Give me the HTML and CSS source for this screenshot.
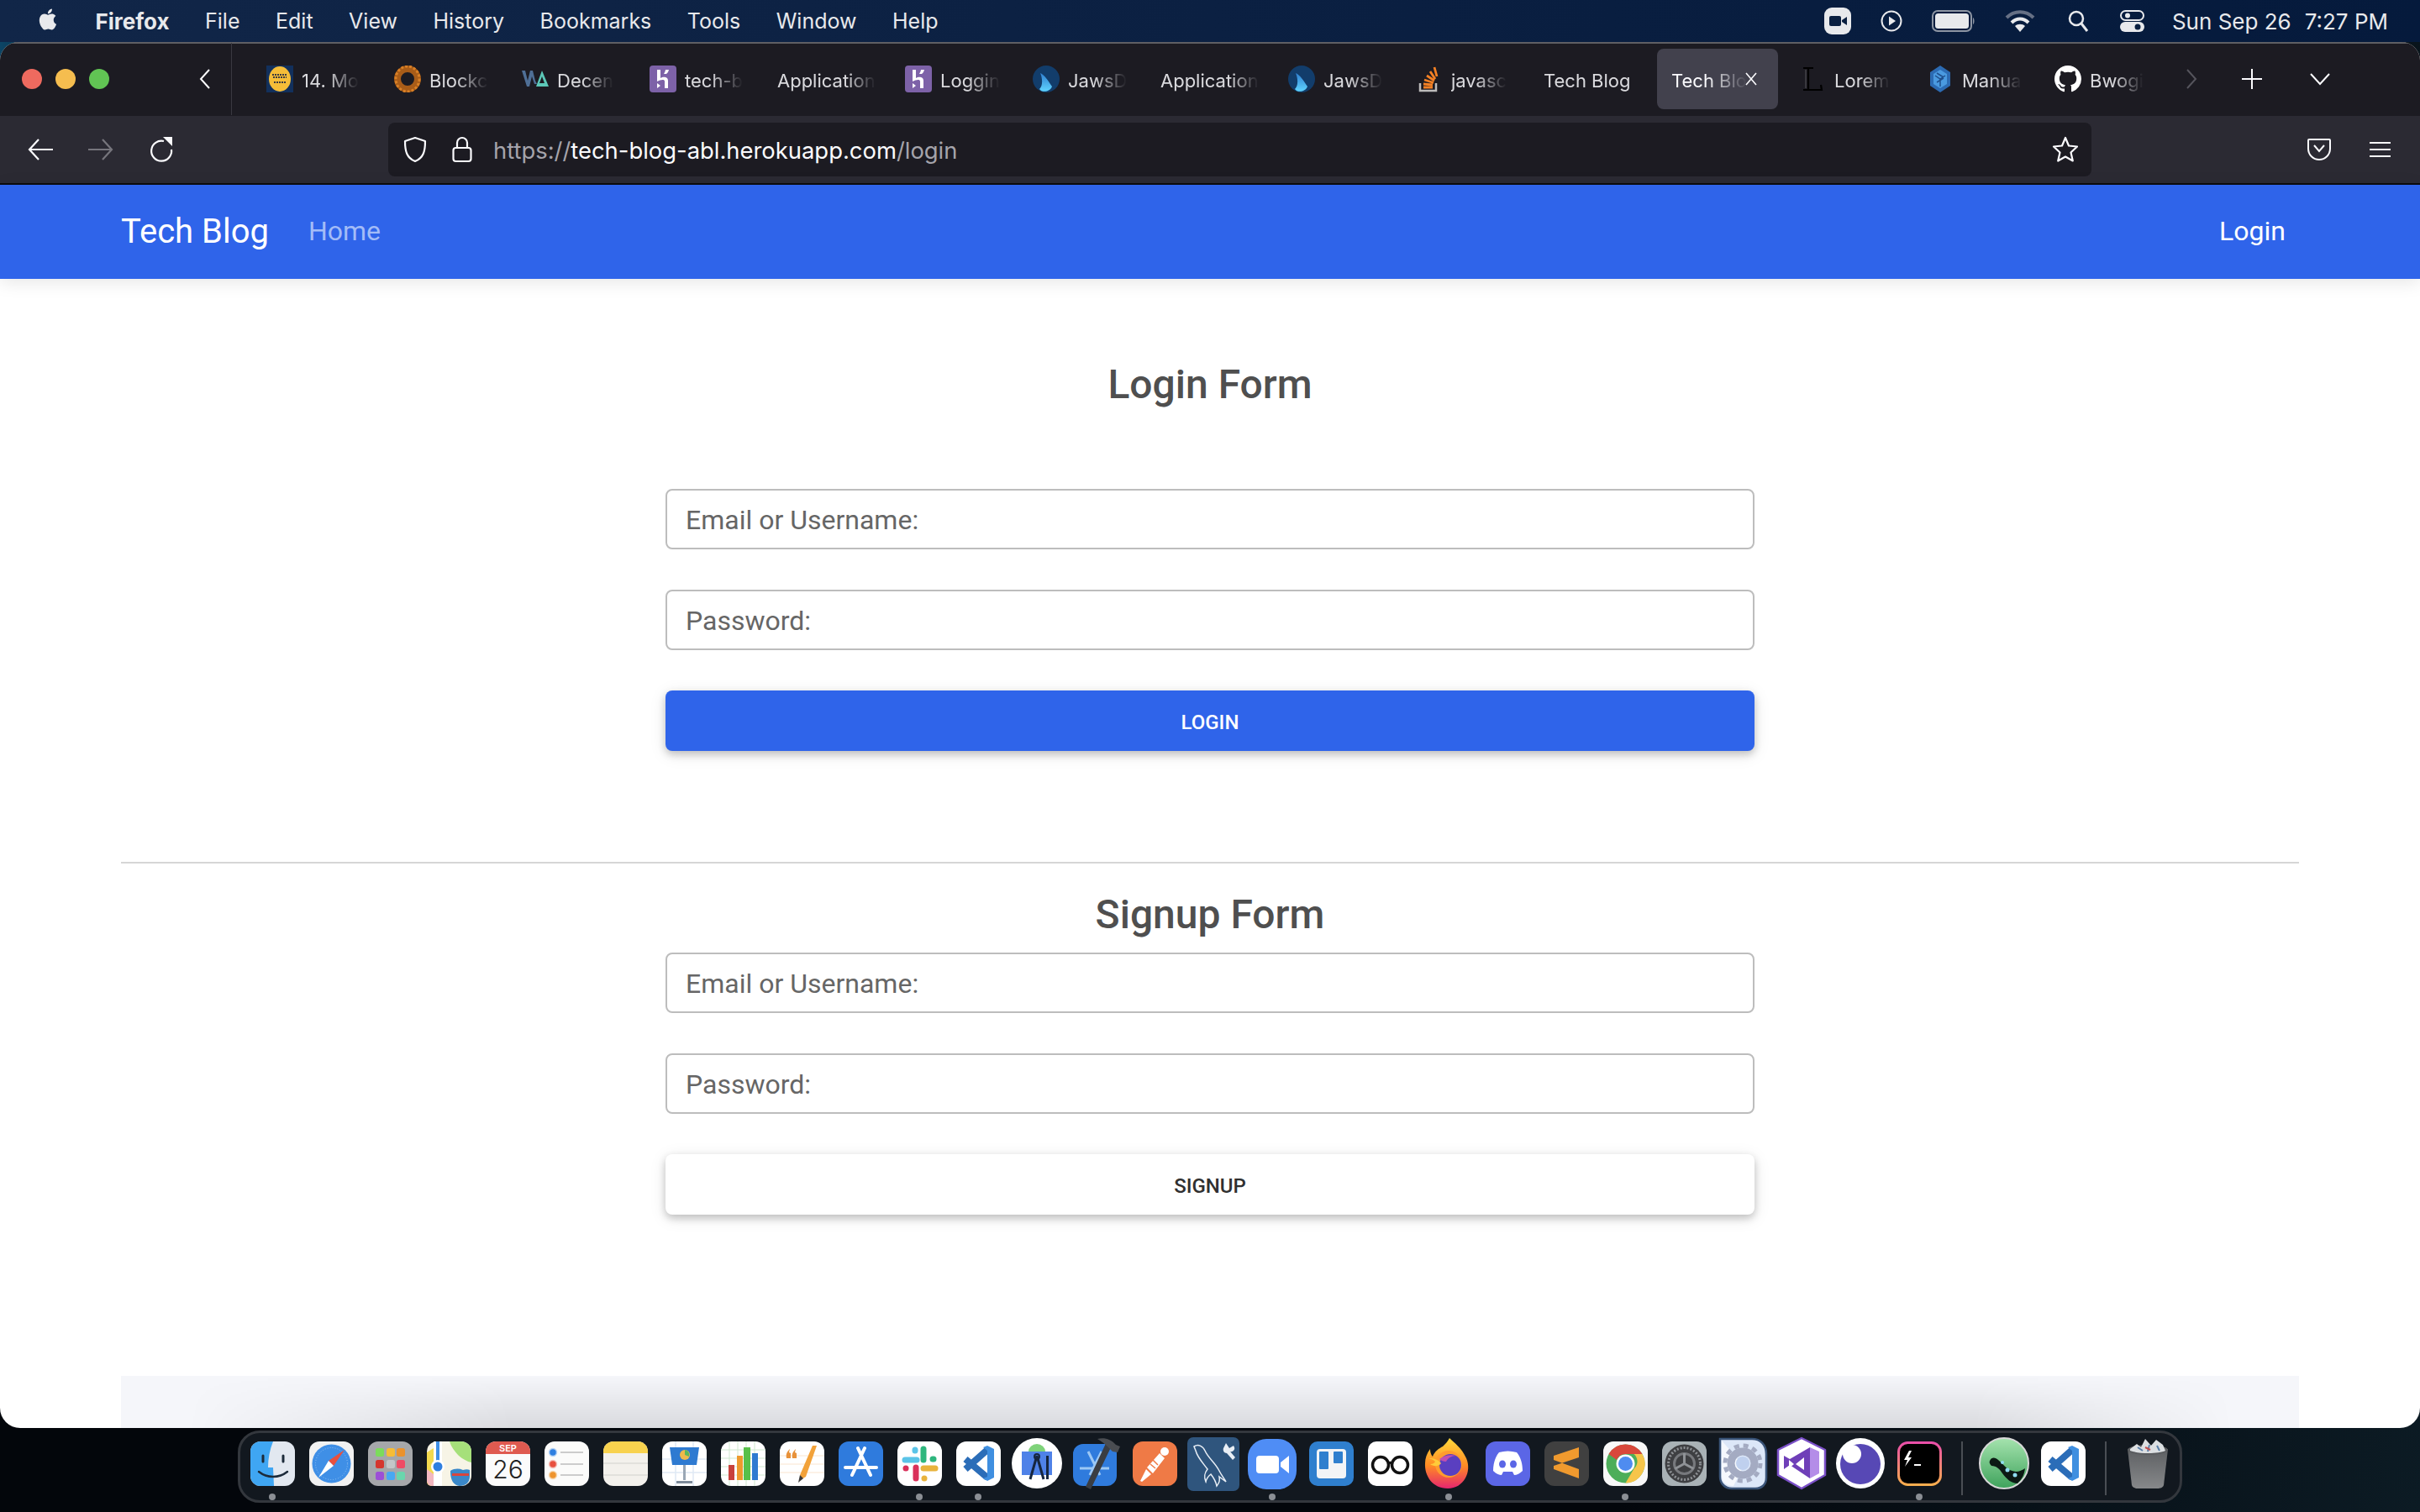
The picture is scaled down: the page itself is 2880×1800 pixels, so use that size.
FILE: index.html
```html
<!DOCTYPE html>
<html lang="en">

<head>
    <meta charset="utf-8">
    <title>Tech Blog</title>
    <link rel="stylesheet" href="styles.css">
</head>

<body>
    <svg class="defs" width="0" height="0">
        <defs>
            <linearGradient id="gFire" x1="0" y1="0" x2="0" y2="1">
                <stop offset="0" stop-color="#ffd93b" />
                <stop offset="0.55" stop-color="#ff8a24" />
                <stop offset="1" stop-color="#e5256f" />
            </linearGradient>
            <linearGradient id="gHyper" x1="0" y1="0" x2="0" y2="1">
                <stop offset="0" stop-color="#ea4fa8" />
                <stop offset="1" stop-color="#f8ad4e" />
            </linearGradient>
            <linearGradient id="gFin" x1="0" y1="0" x2="0" y2="1">
                <stop offset="0" stop-color="#2f7fd0" />
                <stop offset="1" stop-color="#5fd4ff" />
            </linearGradient>
            <linearGradient id="gTrash" x1="0" y1="0" x2="0" y2="1">
                <stop offset="0" stop-color="#5e6063" />
                <stop offset="1" stop-color="#86888a" />
            </linearGradient>
            <linearGradient id="gKraken" x1="0" y1="0" x2="0" y2="1">
                <stop offset="0" stop-color="#a5e3ae" />
                <stop offset="1" stop-color="#3fa35c" />
            </linearGradient>
            <symbol id="vscode" viewBox="0 0 62 62">
                <rect x="5" y="5" width="53" height="53" rx="12" fill="#fff" />
                <path d="M42 15L16 38M16 26l26 22" fill="none" stroke="#2b6db8" stroke-width="8" />
                <path d="M37 12l5-2 8 4v34l-8 4-5-3 5-2V16z" fill="#3f8fe0" />
            </symbol>
            <symbol id="heroku" viewBox="0 0 32 32">
                <rect width="32" height="32" rx="4" fill="#7d62a8" />
                <path d="M9 5h4v10c3-2 9-2 9 3v9h-4v-8c0-3-5-2-9 0zM19 5h4c-.5 2-1.500 4-3 5h-3c1-1.500 1.600-3 2-5zM9 21l4 3-4 3z" fill="#fff" />
            </symbol>
            <symbol id="jaws" viewBox="0 0 32 32">
                <ellipse cx="16" cy="16" rx="16" ry="16" fill="#123d6b" />
                <path d="M9 9c5 2 10 10 14 16-2 6-12 8-15 3 4-4 4-12 1-19z" fill="url(#gFin)" />
            </symbol>
        </defs>
    </svg>

    <div class="menubar">
        <svg class="apple" viewBox="0 0 24 24"><path fill="#e8e9ec" d="M18.71 19.5c-.83 1.24-1.71 2.45-3.05 2.47-1.34.03-1.77-.79-3.29-.79-1.53 0-2 .77-3.27.82-1.31.05-2.3-1.32-3.14-2.53C4.25 17 2.94 12.45 4.7 9.39c.87-1.52 2.43-2.48 4.12-2.51 1.28-.02 2.5.87 3.29.87.78 0 2.26-1.07 3.81-.91.65.03 2.47.26 3.64 1.98-.09.06-2.17 1.28-2.15 3.81.03 3.02 2.65 4.03 2.68 4.04-.03.07-.42 1.44-1.38 2.83M13 3.5c.73-.83 1.94-1.46 2.94-1.5.13 1.17-.34 2.35-1.04 3.19-.69.85-1.83 1.51-2.95 1.42-.15-1.15.41-2.35 1.05-3.11z" /></svg>
        <b>Firefox</b>
        <span>File</span>
        <span>Edit</span>
        <span>View</span>
        <span>History</span>
        <span>Bookmarks</span>
        <span>Tools</span>
        <span>Window</span>
        <span>Help</span>
        <div class="status">
            <svg width="32" height="32" viewBox="0 0 32 32"><rect width="32" height="32" rx="9" fill="#e8e9ec" /><rect x="6" y="10" width="14" height="12" rx="2" fill="#0a1f40" /><path d="M21 15l6-4v10l-6-4z" fill="#0a1f40" /></svg>
            <svg class="s-play" width="26" height="26" viewBox="0 0 26 26"><circle cx="13" cy="13" r="11.500" fill="none" stroke="#e8e9ec" stroke-width="2" /><path d="M10 7.500l8 5.500-8 5.500z" fill="#e8e9ec" /></svg>
            <svg class="s-batt" width="52" height="26" viewBox="0 0 52 26"><rect x="1" y="1" width="46" height="24" rx="6" fill="none" stroke="#8d95a3" stroke-width="2" /><rect x="4" y="4" width="40" height="18" rx="3.500" fill="#e8e9ec" /><path d="M49 9c2 1 2 7 0 8z" fill="#8d95a3" /></svg>
            <svg class="s-wifi" width="36" height="26" viewBox="0 0 36 26"><path d="M2 9c9-9 23-9 32 0" fill="none" stroke="#667085" stroke-width="4" /><path d="M8 15c6-6 14-6 20 0" fill="none" stroke="#e8e9ec" stroke-width="4" /><path d="M18 26l-6-7c3-3 9-3 12 0z" fill="#e8e9ec" /></svg>
            <svg class="s-search" width="26" height="26" viewBox="0 0 26 26"><circle cx="11" cy="10" r="8" fill="none" stroke="#e8e9ec" stroke-width="2.500" /><path d="M17 16l7 9" stroke="#e8e9ec" stroke-width="3" /></svg>
            <svg class="s-ctl" width="29" height="26" viewBox="0 0 29 26"><rect x="1" y="1" width="27" height="11" rx="5.500" fill="none" stroke="#e8e9ec" stroke-width="2" /><circle cx="9" cy="6.500" r="3" fill="#e8e9ec" /><rect y="14" width="29" height="12" rx="6" fill="#e8e9ec" /><circle cx="21" cy="20" r="3.500" fill="#0a1f40" /></svg>
            <span class="clock">Sun Sep 26</span>
            <span class="clock time">7:27 PM</span>
        </div>
    </div>

    <div class="window">
        <div class="tabbar">
            <div class="lights">
                <i class="light red"></i>
                <i class="light amber"></i>
                <i class="light green"></i>
                <svg class="tabs-back" width="16" height="26" viewBox="0 0 16 26"><path d="M13 2L3 13l10 11" fill="none" stroke="#fbfbfe" stroke-width="2" /></svg>
            </div>
            <div class="tabs">
                <div class="tab">
                    <svg class="fav" viewBox="0 0 32 32"><rect width="32" height="32" fill="#12305c" /><ellipse cx="16" cy="16" rx="13" ry="15" fill="#f5bd38" /><path d="M7 11h18M8 14h16M9 20h14" stroke="#3a3a40" stroke-width="2" stroke-dasharray="2 1" /></svg>
                    <span class="label">14. Mo</span>
                </div>
                <div class="tab">
                    <svg class="fav" viewBox="0 0 32 32"><ellipse cx="16" cy="16" rx="12" ry="12" fill="none" stroke="#a85c18" stroke-width="8" /><ellipse cx="16" cy="16" rx="14" ry="15" fill="none" stroke="#d98026" stroke-width="3" stroke-dasharray="3 2" /><circle cx="16" cy="16" r="4" fill="#1c1b22" /></svg>
                    <span class="label">Blockc</span>
                </div>
                <div class="tab">
                    <svg class="fav" viewBox="0 0 32 32"><path d="M0 6h4l3 12 3-12h3l3 12 2 4h-3l-3-9-3 12H6z" fill="#4f6f96" /><path d="M24 6l8 19H17zM24 13l-3 8h6z" fill="#5cc8b8" /></svg>
                    <span class="label">Decen</span>
                </div>
                <div class="tab">
                    <svg class="fav"><use href="#heroku" /></svg>
                    <span class="label">tech-b</span>
                </div>
                <div class="tab plain"><span class="label">Application</span></div>
                <div class="tab">
                    <svg class="fav"><use href="#heroku" /></svg>
                    <span class="label">Loggin</span>
                </div>
                <div class="tab">
                    <svg class="fav"><use href="#jaws" /></svg>
                    <span class="label">JawsD</span>
                </div>
                <div class="tab plain"><span class="label">Application</span></div>
                <div class="tab">
                    <svg class="fav"><use href="#jaws" /></svg>
                    <span class="label">JawsD</span>
                </div>
                <div class="tab">
                    <svg class="fav" viewBox="0 0 32 32"><path d="M5 21v9h19v-9" fill="none" stroke="#bcbbbb" stroke-width="2.500" /><path d="M9 26h11M9 22l11 1M10 17l11 3.500M13 12l9 6M17 7l6 9M22 2l3 11" stroke="#f48024" stroke-width="2.800" fill="none" /></svg>
                    <span class="label">javasc</span>
                </div>
                <div class="tab plain"><span class="label whole">Tech Blog</span></div>
                <div class="tab active">
                    <span class="label">Tech Blo</span>
                    <svg class="tab-x" width="16" height="16" viewBox="0 0 16 16"><path d="M2 1l12 14M14 1L2 15" stroke="#fbfbfe" stroke-width="1.600" /></svg>
                </div>
                <div class="tab">
                    <svg class="fav" viewBox="0 0 32 32"><path d="M5 3h12M11 3v25M5 29h22l-1-6" fill="none" stroke="#000" stroke-width="2.200" /><path d="M8 5v22" stroke="#56565a" stroke-width="1" /></svg>
                    <span class="label">Lorem</span>
                </div>
                <div class="tab">
                    <svg class="fav" viewBox="0 0 32 32"><path d="M16 0l12 8v16l-12 8-12-8V8z" fill="#2c6bb3" /><path d="M16 5l8 5v12l-8 5-8-5V10z" fill="#4a9ae0" /><path d="M10 12l6 4 6-4M16 16v9M12 9l8 5M12 20l8-5" stroke="#1f4f8c" stroke-width="1.500" fill="none" /></svg>
                    <span class="label">Manua</span>
                </div>
                <div class="tab">
                    <svg class="fav" viewBox="0 0 16 16"><path fill="#fff" d="M8 0C3.580 0 0 3.580 0 8c0 3.540 2.290 6.530 5.470 7.590.4.070.55-.17.55-.38 0-.19-.01-.82-.01-1.490-2.010.37-2.530-.49-2.690-.94-.09-.23-.48-.94-.82-1.130-.28-.15-.68-.52-.01-.53.63-.01 1.080.58 1.230.82.72 1.210 1.870.87 2.330.66.07-.52.28-.87.51-1.070-1.780-.2-3.640-.89-3.640-3.950 0-.87.31-1.590.82-2.150-.08-.2-.36-1.020.08-2.120 0 0 .67-.21 2.200.82.64-.18 1.320-.27 2-.27.68 0 1.360.09 2 .27 1.530-1.040 2.200-.82 2.200-.82.44 1.100.16 1.920.08 2.120.51.56.82 1.270.82 2.150 0 3.070-1.870 3.750-3.650 3.950.29.25.54.73.54 1.480 0 1.070-.01 1.930-.01 2.200 0 .21.15.46.55.38A8.013 8.013 0 0016 8c0-4.420-3.580-8-8-8z" /></svg>
                    <span class="label">Bwogi</span>
                </div>
            </div>
            <svg class="tab-next" width="24" height="26" viewBox="0 0 24 26"><path d="M7 2l10 11L7 24" fill="none" stroke="#55545c" stroke-width="2" /></svg>
            <svg class="tab-new" width="24" height="24" viewBox="0 0 24 24"><path d="M12 0v24M0 12h24" stroke="#fbfbfe" stroke-width="2" /></svg>
            <svg class="tab-list" width="24" height="16" viewBox="0 0 24 16"><path d="M1 2l11 12L23 2" fill="none" stroke="#fbfbfe" stroke-width="2" /></svg>
        </div>

        <div class="toolbar">
            <svg class="t-back" width="30" height="26" viewBox="0 0 30 26"><path d="M13 1L2 13l11 12M2 13h28" fill="none" stroke="#fbfbfe" stroke-width="2.200" /></svg>
            <svg class="t-fwd" width="30" height="26" viewBox="0 0 30 26"><path d="M17 1l11 12-11 12M28 13H0" fill="none" stroke="#76757c" stroke-width="2.200" /></svg>
            <svg class="t-reload" width="30" height="30" viewBox="0 0 30 30"><path d="M19 5a12 12 0 1 0 9 10" fill="none" stroke="#fbfbfe" stroke-width="2.200" /><path d="M18 0h11v11z" fill="#fbfbfe" /></svg>
            <div class="urlbar">
                <svg width="30" height="32" viewBox="0 0 30 32"><path d="M15 2l12 4c0 12-2 20-12 24C5 26 3 18 3 6z" fill="none" stroke="#fbfbfe" stroke-width="2.200" stroke-linejoin="round" /></svg>
                <svg class="u-lock" width="24" height="32" viewBox="0 0 24 32"><path d="M6 14V8a6 6 0 0 1 12 0v6" fill="none" stroke="#fbfbfe" stroke-width="2.200" /><rect x="1.500" y="14" width="21" height="16" rx="3" fill="none" stroke="#fbfbfe" stroke-width="2.200" /></svg>
                <span class="url"><em>https://</em>tech-blog-abl.herokuapp.com<em>/login</em></span>
                <svg class="u-star" width="32" height="32" viewBox="0 0 32 32"><path d="M16 2l4 9.500 10 1-7.500 7 2.300 10L16 24.500 7.200 29.500l2.300-10L2 12.500l10-1z" fill="none" stroke="#fbfbfe" stroke-width="2.200" stroke-linejoin="round" /></svg>
            </div>
            <svg class="t-pocket" width="28" height="26" viewBox="0 0 28 26"><path d="M2 1h24a1 1 0 0 1 1 1v10a13 13 0 0 1-26 0V2a1 1 0 0 1 1-1z" fill="none" stroke="#fbfbfe" stroke-width="2" /><path d="M8 8l6 7 6-7" fill="none" stroke="#fbfbfe" stroke-width="2" /></svg>
            <svg class="t-menu" width="25" height="20" viewBox="0 0 25 20"><path d="M0 2h25M0 10h25M0 18h25" stroke="#fbfbfe" stroke-width="2.200" /></svg>
        </div>

        <nav class="navbar">
            <a class="brand">Tech Blog</a>
            <a class="nav-link">Home</a>
            <a class="nav-login">Login</a>
        </nav>

        <main class="page">
            <section class="login-box">
                <h3 class="form-title">Login Form</h3>
                <form class="auth-form">
                    <input class="field" type="text" placeholder="Email or Username:">
                    <input class="field" type="password" placeholder="Password:">
                    <button class="btn btn-blue" type="button">Login</button>
                </form>
            </section>
            <hr class="rule">
            <section class="signup-box">
                <h3 class="form-title tight">Signup Form</h3>
                <form class="auth-form">
                    <input class="field" type="text" placeholder="Email or Username:">
                    <input class="field" type="password" placeholder="Password:">
                    <button class="btn btn-light" type="button">Signup</button>
                </form>
            </section>
            <footer class="foot"></footer>
        </main>
    </div>

    <div class="desk">
        <div class="dock">
            <!-- finder -->
            <div class="app on"><svg viewBox="0 0 62 62"><rect x="5" y="5" width="53" height="53" rx="12" fill="#e2e8f0" /><path d="M17 5h15c-4 10-6 20-6 31h6l1 22H17A12 12 0 0 1 5 46V17A12 12 0 0 1 17 5z" fill="#3fa6f3" /><path d="M20 22v7M44 22v7" stroke="#1c2b3a" stroke-width="3" stroke-linecap="round" /><path d="M15 41c10 8 24 8 34 0" fill="none" stroke="#1c2b3a" stroke-width="2.500" stroke-linecap="round" /></svg><i class="dot"></i></div>
            <!-- safari -->
            <div class="app"><svg viewBox="0 0 62 62"><rect x="5" y="5" width="53" height="53" rx="12" fill="#f1f1f1" /><circle cx="31.500" cy="31.500" r="23" fill="#3f8fe6" /><circle cx="31.500" cy="31.500" r="19" fill="none" stroke="#8fc0f2" stroke-width="1" stroke-dasharray="1 2" /><path d="M47 15L28 28l6 6z" fill="#e8503f" /><path d="M16 48l12-20 6 6z" fill="#fff" /></svg></div>
            <!-- launchpad -->
            <div class="app"><svg viewBox="0 0 62 62"><rect x="5" y="5" width="53" height="53" rx="12" fill="#a5a7aa" /><g><rect x="14" y="13" width="10" height="10" rx="2.500" fill="#7bdc5b" /><rect x="27" y="13" width="10" height="10" rx="2.500" fill="#f6bd36" /><rect x="39" y="13" width="10" height="10" rx="2.500" fill="#ea922d" /><rect x="14" y="27" width="10" height="10" rx="2.500" fill="#d5362e" /><rect x="27" y="27" width="10" height="10" rx="2.500" fill="#c3c6c8" /><rect x="39" y="27" width="10" height="10" rx="2.500" fill="#ef4b65" /><rect x="14" y="41" width="10" height="10" rx="2.500" fill="#9c4fd6" /><rect x="27" y="41" width="10" height="10" rx="2.500" fill="#48a8f2" /><rect x="39" y="41" width="10" height="10" rx="2.500" fill="#69d6ad" /></g></svg></div>
            <!-- maps -->
            <div class="app"><svg viewBox="0 0 62 62"><rect x="5" y="5" width="53" height="53" rx="12" fill="#f7f4e6" /><path d="M32 5h14a12 12 0 0 1 12 12v13C48 28 36 18 32 5z" fill="#a6e07a" /><path d="M5 18l8-5v45h-3a5 5 0 0 1-5-5z" fill="#f2d94e" /><path d="M5 38l8 6v14h-2a6 6 0 0 1-6-6z" fill="#f2b7c0" /><rect x="13" y="5" width="10" height="53" fill="#fff" /><rect x="16" y="5" width="4" height="27" fill="#3f8fe6" /><circle cx="18" cy="35" r="8" fill="#fff" /><circle cx="18" cy="35" r="5.500" fill="#2f7fe0" /><path d="M33 40c5-3 10-3 15-1 3-1 6-1 8 0v8c0 7-5 11-12 11-7-1-11-6-11-18z" fill="#3a88c9" /><rect x="35" y="43" width="20" height="3" fill="#d9453d" /></svg></div>
            <!-- calendar -->
            <div class="app"><svg viewBox="0 0 62 62"><rect x="5" y="5" width="53" height="53" rx="12" fill="#fbfbfb" /><path d="M5 20V17A12 12 0 0 1 17 5h29a12 12 0 0 1 12 12v3z" fill="#df5a50" /><text x="31.500" y="17" class="cal-m">SEP</text><text x="31.500" y="49" class="cal-d">26</text></svg></div>
            <!-- reminders -->
            <div class="app"><svg viewBox="0 0 62 62"><rect x="5" y="5" width="53" height="53" rx="12" fill="#fbfbfa" /><circle cx="15" cy="18" r="4.500" fill="#2f7fe0" stroke="#b9d5f5" stroke-width="1.500" /><circle cx="15" cy="32" r="4.500" fill="#e8503f" stroke="#f5c2bb" stroke-width="1.500" /><circle cx="15" cy="45" r="4.500" fill="#ee942e" stroke="#f8d8b0" stroke-width="1.500" /><path d="M24 18h27M24 32h27M24 45h27" stroke="#bdbdbd" stroke-width="1.500" /></svg></div>
            <!-- notes -->
            <div class="app"><svg viewBox="0 0 62 62"><rect x="5" y="5" width="53" height="53" rx="12" fill="#f3f1ec" /><path d="M5 19v-2A12 12 0 0 1 17 5h29a12 12 0 0 1 12 12v2z" fill="#f8d24e" /><path d="M5 31h53M5 45h53" stroke="#dddbd6" stroke-width="1.500" /></svg></div>
            <!-- keynote -->
            <div class="app"><svg viewBox="0 0 62 62"><rect x="5" y="5" width="53" height="53" rx="12" fill="#fff" /><path d="M5 26h53M5 42h53M21 5v53M42 5v53" stroke="#dfe9f5" stroke-width="1.500" /><path d="M14 12h35l-3 21H17z" fill="#2e7ad1" /><circle cx="32" cy="21" r="6" fill="#f0b94a" /><path d="M32 21v-6a6 6 0 0 1 5 8z" fill="#5cb85c" /><rect x="30" y="33" width="3" height="18" fill="#9aa7b5" /><path d="M22 52h19v3H22z" fill="#7d8a99" /></svg></div>
            <!-- numbers -->
            <div class="app"><svg viewBox="0 0 62 62"><rect x="5" y="5" width="53" height="53" rx="12" fill="#fff" /><path d="M5 15h53M5 25h53M5 35h53M5 45h53M15 5v53M25 5v53M35 5v53M45 5v53" stroke="#cfe8cf" stroke-width="1" /><rect x="14" y="33" width="7" height="18" fill="#c8413c" /><rect x="24" y="22" width="7" height="29" fill="#ee9a2e" /><rect x="32" y="12" width="8" height="39" fill="#58c04a" /><rect x="42" y="19" width="7" height="32" fill="#2e7ad1" /></svg></div>
            <!-- pages -->
            <div class="app"><svg viewBox="0 0 62 62"><rect x="5" y="5" width="53" height="53" rx="12" fill="#fff" /><path d="M5 22h53M5 32h53M5 42h53" stroke="#fae5cf" stroke-width="1" /><path d="M17 14c-3 3-5 5-4 11l5 0v-6l-2-1zM24 14c-3 3-5 5-4 11l5 0v-6l-2-1z" fill="#e8923a" /><path d="M49 10l-5 0-15 35 2 5 5-3z" fill="#f2a23a" /><path d="M29 45l-2 9 6-5z" fill="#3a3a3a" /></svg></div>
            <!-- app store -->
            <div class="app"><svg viewBox="0 0 62 62"><rect x="5" y="5" width="53" height="53" rx="12" fill="#2f7bdd" /><path d="M28 13l15 32M36 13L21 45M13 36h37" stroke="#fff" stroke-width="4" stroke-linecap="round" fill="none" /></svg></div>
            <!-- slack -->
            <div class="app on"><svg viewBox="0 0 62 62"><rect x="5" y="5" width="53" height="53" rx="12" fill="#fff" /><g stroke-linecap="round" stroke-width="7" fill="none"><path d="M14 27h14" stroke="#5bc4e8" /><path d="M26 15v1" stroke="#5bc4e8" /><path d="M36 14v13" stroke="#2eb67d" /><path d="M47 26h1" stroke="#2eb67d" /><path d="M36 37h14" stroke="#e8b33c" /><path d="M37 49h0" stroke="#e8b33c" /><path d="M27 36v13" stroke="#d9305a" /><path d="M15 37h0" stroke="#d9305a" /></g></svg><i class="dot"></i></div>
            <!-- vs code -->
            <div class="app on"><svg viewBox="0 0 62 62"><use href="#vscode" /></svg><i class="dot"></i></div>
            <!-- android studio -->
            <div class="app"><svg viewBox="0 0 62 62"><ellipse cx="31" cy="31" rx="30" ry="30" fill="#fff" /><path d="M21 17a10 9 0 0 1 20 0z" fill="#7fd37a" /><path d="M13 17h36v28H13z" fill="#4f82e8" /><path d="M31 22l-8 28M31 22l8 28" stroke="#16263f" stroke-width="3" /><circle cx="31" cy="23" r="3" fill="none" stroke="#16263f" stroke-width="2" /><path d="M42 22h3v28h-3z" fill="#16263f" /></svg></div>
            <!-- xcode -->
            <div class="app"><svg viewBox="0 0 62 62"><rect x="4" y="8" width="52" height="50" rx="12" fill="#2f7bdd" /><path d="M22 17l14 28M38 17L24 45M12 37h35" stroke="#9cc8f5" stroke-width="3" fill="none" /><path d="M45 3L19 59l6 3 26-54z" fill="#3a3d42" /><path d="M33 2c8-2 16 0 22 7l5 2-3 7-6-1-6-6c-3-3-7-6-12-9z" fill="#4a4d52" /></svg></div>
            <!-- postman -->
            <div class="app"><svg viewBox="0 0 62 62"><rect x="5" y="5" width="53" height="53" rx="12" fill="#ef7a46" /><circle cx="43" cy="17" r="5" fill="#fff" /><path d="M37 19l6 6-14 18-7-7zM21 38l6 6-11 9-2-1z" fill="#fff" /><path d="M29 27l6 6M26 32l6 5" stroke="#ef7a46" stroke-width="1.500" /></svg></div>
            <!-- mysql workbench -->
            <div class="app"><svg viewBox="0 0 62 62"><rect y="0" width="62" height="64" rx="7" fill="#2f557d" /><path d="M8 11c5-3 10-1 13 5 4 9 12 14 17 24 3 6 6 9 8 13l-8-6c1 5 0 7-3 11-1-5-3-9-7-14-4 3-5 5-6 9-3-7-1-11 2-15-5-7-12-14-14-22z" fill="none" stroke="#e8eef5" stroke-width="1.500" /><path d="M46 7l4 6 5-3 1 2c1 3-2 6-5 5l6 7-3 3-7-8c-3 0-5-3-4-6z" fill="#e8eef5" /></svg></div>
            <!-- zoom -->
            <div class="app on"><svg viewBox="0 0 62 62"><rect y="2" width="58" height="60" rx="22" fill="#4f8df5" transform="translate(2 0)" /><rect x="12" y="22" width="27" height="21" rx="4" fill="#fff" /><path d="M41 30l10-8v21l-10-8z" fill="#fff" /></svg><i class="dot"></i></div>
            <!-- trello -->
            <div class="app"><svg viewBox="0 0 62 62"><rect x="5" y="5" width="53" height="53" rx="10" fill="#2f7fce" /><rect x="14" y="14" width="35" height="35" rx="4" fill="#f2f4f6" /><rect x="17" y="17" width="11" height="21" rx="1" fill="#2f7fce" /><rect x="34" y="17" width="11" height="14" rx="1" fill="#2f7fce" /></svg></div>
            <!-- glasses -->
            <div class="app"><svg viewBox="0 0 62 62"><rect x="5" y="5" width="53" height="53" rx="10" fill="#fff" /><circle cx="20" cy="33" r="9.500" fill="none" stroke="#111" stroke-width="3.500" /><circle cx="43" cy="33" r="9.500" fill="none" stroke="#111" stroke-width="3.500" /><path d="M29 31c2-1 3-1 5 0" stroke="#111" stroke-width="3" fill="none" /></svg></div>
            <!-- firefox -->
            <div class="app on"><svg viewBox="0 0 62 62"><path d="M32 1c6 6 14 11 20 24 7 16-3 36-22 36C12 61 2 46 3 31c0-6 2-12 6-17 0 5 2 8 3 9 2-6 8-10 12-12 3-3 6-6 8-10z" fill="url(#gFire)" /><circle cx="31" cy="32" r="16" fill="#ff9c2e" /><circle cx="33" cy="33" r="13" fill="#5a3fc0" /><path d="M20 26c5-4 13-6 20-4-6 0-10 3-12 7-3 0-6-1-8-3z" fill="#c04fb0" /><path d="M7 25c6 0 11 1 15 6-3 4-9 4-13 1 3 0 5-1 6-3-3-3-5-3-8-4z" fill="#ffcb3a" /></svg><i class="dot"></i></div>
            <!-- discord -->
            <div class="app"><svg viewBox="0 0 62 62"><rect x="5" y="5" width="53" height="53" rx="12" fill="#5b66e6" /><path d="M21 18c7-2 14-2 21 0 5 6 7 14 7 22-3 3-7 5-10 5l-2-4h-11l-2 4c-3 0-7-2-10-5 0-8 2-16 7-22z" fill="#fff" /><ellipse cx="25" cy="32" rx="4" ry="4.500" fill="#5b66e6" /><ellipse cx="38" cy="32" rx="4" ry="4.500" fill="#5b66e6" /></svg></div>
            <!-- sublime -->
            <div class="app"><svg viewBox="0 0 62 62"><rect x="5" y="5" width="53" height="53" rx="12" fill="#404040" /><path d="M46 12v12L16 34V22zM16 27v11l30 11V38z" fill="#f09a2e" /></svg></div>
            <!-- chrome -->
            <div class="app on"><svg viewBox="0 0 62 62"><rect x="5" y="5" width="53" height="53" rx="12" fill="#f8f8f8" /><circle cx="31.500" cy="31.500" r="23" fill="#4dae5a" /><path d="M31.500 8.500a23 23 0 0 1 20 11.500H31.500a11.500 11.500 0 0 0-10.500 7L11.500 20a23 23 0 0 1 20-11.500z" fill="#d9483b" /><path d="M51.500 20a23 23 0 0 1-20 34.500l10-17a11.500 11.500 0 0 0 0-17.500z" fill="#f6c54a" /><circle cx="31.500" cy="31.500" r="11" fill="#fff" /><circle cx="31.500" cy="31.500" r="8.500" fill="#4f8cf0" /></svg><i class="dot"></i></div>
            <!-- system preferences -->
            <div class="app"><svg viewBox="0 0 62 62"><rect x="5" y="5" width="53" height="53" rx="12" fill="#a9b2b6" /><circle cx="31.500" cy="31.500" r="23" fill="#3e3f42" /><circle cx="31.500" cy="31.500" r="19" fill="none" stroke="#8f9296" stroke-width="3" stroke-dasharray="2 2" /><circle cx="31.500" cy="31.500" r="12" fill="none" stroke="#77797d" stroke-width="3" /><path d="M31.500 31.500V19M31.500 31.500l11 6M31.500 31.500l-11 6" stroke="#8f9296" stroke-width="3" /></svg></div>
            <!-- gear -->
            <div class="app"><svg viewBox="0 0 62 62"><path d="M4 2h38c10 0 17 7 17 18v28c0 8-5 13-13 13H18C10 61 4 55 4 47z" fill="#dce7f8" stroke="#3a5478" stroke-width="2.500" /><path d="M6 4l26 30-12 24C10 58 6 52 6 46z" fill="#fff" opacity="0.7" /><circle cx="31" cy="31" r="14" fill="none" stroke="#a4abc2" stroke-width="9" /><circle cx="31" cy="31" r="21" fill="none" stroke="#a4abc2" stroke-width="5" stroke-dasharray="6 5" /><circle cx="31" cy="31" r="8" fill="#bfd0ee" /></svg></div>
            <!-- visual studio -->
            <div class="app"><svg viewBox="0 0 62 62"><path d="M31 1l28 14v30L31 61 3 45V15z" fill="#fff" stroke="#7b50c8" stroke-width="2.500" stroke-linejoin="round" /><path d="M41 12l11 5v26l-11 6z" fill="#b48de8" /><path d="M41 12v37L17 33l-7 5V22l7 4z" fill="#6f3fb8" /><path d="M16 27v10l6-5z" fill="#fff" /><path d="M34 24v15l-10-7z" fill="#fff" /></svg></div>
            <!-- moon -->
            <div class="app"><svg viewBox="0 0 62 62"><ellipse cx="31" cy="31" rx="29" ry="30" fill="#fff" /><circle cx="31" cy="32" r="24" fill="#5748b5" /><circle cx="21" cy="20" r="11" fill="#fff" /></svg></div>
            <!-- hyper -->
            <div class="app on"><svg viewBox="0 0 62 62"><rect x="6.500" y="6.500" width="50" height="50" rx="11" fill="#000" stroke="url(#gHyper)" stroke-width="3" /><path d="M19 16l-6 11h4l-3 8 8-11h-4l4-8z" fill="#fff" /><rect x="25" y="32" width="8" height="2" fill="#fff" /></svg><i class="dot"></i></div>
            <div class="divider"></div>
            <!-- gitkraken -->
            <div class="app"><svg viewBox="0 0 62 62"><ellipse cx="31" cy="31" rx="29" ry="30" fill="url(#gKraken)" stroke="#d8d8d8" stroke-width="2" /><path d="M14 28c2-5 7-4 10-1 7 6 11 13 21 14 4 0 8-2 11-4-1 8-4 13-9 18-7 0-13-5-18-12-3-5-7-9-13-9-2-2-3-4-2-6z" fill="#0c1a14" /><circle cx="29" cy="30" r="2" fill="#8fdcf0" /><circle cx="35" cy="39" r="2.500" fill="#8fdcf0" /><circle cx="44" cy="45" r="2.500" fill="#8fdcf0" /></svg></div>
            <!-- vs code -->
            <div class="app"><svg viewBox="0 0 62 62"><use href="#vscode" /></svg></div>
            <div class="divider"></div>
            <!-- trash -->
            <div class="app"><svg viewBox="0 0 62 62"><path d="M7 14h48l-5 43c-1 3-4 4-8 4H20c-4 0-7-1-8-4z" fill="url(#gTrash)" /><ellipse cx="31" cy="15" rx="24" ry="6" fill="#5a5c5f" /><path d="M10 14l8-6 5 4 5-10 7 8 6-7 8 6 3 7c-8 4-32 4-42 0z" fill="#dcdfe2" /><path d="M19 12l6 4M33 9l-2 8M42 10l3 6" stroke="#5a7fa8" stroke-width="2" /><path d="M28 12l6 3" stroke="#c04f4f" stroke-width="2" /></svg></div>
        </div>
    </div>
</body>

</html>
```

FILE: styles.css
```css
* {
    box-sizing: border-box;
}

html,
body {
    margin: 0;
    height: 1800px;
    overflow: hidden;
}

body {
    display: flex;
    flex-direction: column;
    background: linear-gradient(100deg, #0d4a6d 0, #03060b 4%, #03060b 70%, #0c1b24 100%);
    font-family: "Roboto", sans-serif;
}

.defs {
    position: absolute;
}

/* mac menu bar */
.menubar {
    height: 50px;
    flex: none;
    display: flex;
    align-items: center;
    gap: 42.5px;
    padding: 0 38px 0 45px;
    background: linear-gradient(90deg, #112648, #051a3c);
    color: #e8e9ec;
    font-family: "Inter", sans-serif;
    font-size: 25px;
}

.menubar b {
    font-size: 26px;
    font-weight: 700;
}

.apple {
    width: 30px;
    height: 36px;
    margin: -4px -1px 0 -3px;
}

.status {
    margin-left: auto;
    display: flex;
    align-items: center;
}

.s-play {
    margin-left: 35px;
}

.s-batt {
    margin-left: 35px;
}

.s-wifi {
    margin-left: 35px;
}

.s-search {
    margin-left: 38px;
}

.s-ctl {
    margin-left: 37px;
}

.clock {
    margin-left: 33px;
    font-size: 26px;
}

.time {
    margin-left: 16px;
}

/* browser window */
.window {
    height: 1650px;
    flex: none;
    display: flex;
    flex-direction: column;
    overflow: hidden;
    border-radius: 22px 22px 24px 24px;
    background: #fff;
}

.tabbar {
    height: 88px;
    flex: none;
    display: flex;
    align-items: center;
    padding-bottom: 2px;
    background: #1c1b22;
    border-top: 2px solid #5f5f63;
}

.lights {
    width: 276px;
    height: 86px;
    flex: none;
    display: flex;
    align-items: center;
    padding-left: 26px;
    gap: 16px;
    border-right: 1px solid #3a3941;
}

.light {
    width: 24px;
    height: 24px;
    border-radius: 50%;
}

.red {
    background: #ee6a5f;
}

.amber {
    background: #f5bd4f;
}

.green {
    background: #61c454;
}

.tabs-back {
    margin-left: 90px;
}

.tabs {
    display: flex;
    padding-left: 20px;
}

.tab {
    width: 144px;
    height: 72px;
    margin: 0 4px;
    padding: 0 0 0 17px;
    display: flex;
    align-items: center;
    gap: 10px;
    border-radius: 8px;
    color: #fbfbfe;
    font-family: "Inter", sans-serif;
    font-size: 22px;
    position: relative;
}

.active {
    background: #42414d;
}

.fav {
    width: 32px;
    height: 32px;
    flex: none;
}

.label {
    flex: none;
    padding-top: 3px;
    white-space: nowrap;
    opacity: 0.85;
    -webkit-mask-image: linear-gradient(90deg, #000 45%, transparent);
    mask-image: linear-gradient(90deg, #000 45%, transparent);
}

.plain .label {
    -webkit-mask-image: linear-gradient(90deg, #000 70%, transparent);
    mask-image: linear-gradient(90deg, #000 70%, transparent);
}

.plain .whole {
    -webkit-mask-image: none;
    mask-image: none;
}

.active .label {
    opacity: 1;
}

.tab-x {
    position: absolute;
    right: 24px;
    top: 28px;
}

.tab-next {
    margin-left: 20px;
}

.tab-new {
    margin-left: 48px;
}

.tab-list {
    margin-left: 57px;
}

.toolbar {
    height: 82px;
    flex: none;
    display: flex;
    align-items: center;
    padding: 0 0 0 33px;
    background: #2b2a33;
    border-bottom: 2px solid #0c0c0d;
}

.t-fwd {
    margin-left: 42px;
}

.t-reload {
    margin-left: 41px;
}

.urlbar {
    width: 2027px;
    height: 64px;
    margin-left: 256px;
    padding: 0 15px 0 17px;
    display: flex;
    align-items: center;
    border-radius: 8px;
    background: #1c1b22;
}

.u-lock {
    margin-left: 29px;
}

.url {
    margin-left: 25px;
    padding-top: 2px;
    color: #fbfbfe;
    font-family: "Inter", sans-serif;
    font-size: 27.400px;
}

.url em {
    font-style: normal;
    color: #a5a4ab;
}

.u-star {
    margin-left: auto;
}

.t-pocket {
    margin-left: 257px;
}

.t-menu {
    margin-left: 46px;
}

/* site navbar */
.navbar {
    height: 112px;
    flex: none;
    display: flex;
    align-items: center;
    padding: 0 144px 2px;
    background: #2f64ea;
    box-shadow: 0 4px 20px rgba(0, 0, 0, 0.1);
    position: relative;
    color: #fff;
}

.brand {
    font-size: 40px;
}

.nav-link {
    margin-left: 47px;
    font-size: 32px;
    color: #a3bcf7;
}

.nav-login {
    margin-left: auto;
    margin-right: 16px;
    font-size: 32px;
}

.page {
    padding: 97px 144px 0;
}

.form-title {
    margin: 0 0 95px;
    text-align: center;
    color: #4f4f4f;
    font-size: 48px;
    font-weight: 500;
    line-height: 58px;
}

.tight {
    margin-bottom: 16px;
}

.auth-form {
    width: 1296px;
    margin: 0 auto;
    display: flex;
    flex-direction: column;
    gap: 48px;
}

.field {
    height: 72px;
    padding: 2px 22px 0;
    border: 2px solid #bdbdbd;
    border-radius: 8px;
    font-family: "Roboto", sans-serif;
    font-size: 32px;
    color: #4f4f4f;
    outline: none;
}

.field::placeholder {
    color: #666;
    opacity: 1;
}

.btn {
    height: 72px;
    padding-top: 4px;
    border: 0;
    border-radius: 8px;
    font-family: "Roboto", sans-serif;
    font-size: 24px;
    font-weight: 500;
    text-transform: uppercase;
    box-shadow: 0 4px 10px rgba(0, 0, 0, 0.2), 0 4px 20px rgba(0, 0, 0, 0.1);
}

.btn-blue {
    background: #2f64ea;
    color: #fff;
}

.btn-light {
    background: #fff;
    color: #303030;
}

.rule {
    height: 2px;
    margin: 132px 0 32px;
    border: 0;
    background: #d6d6d6;
}

.foot {
    height: 62px;
    margin-top: 192px;
    background: #f5f6fa;
    position: relative;
}

.foot::after {
    content: "";
    position: absolute;
    inset: 0;
    background: linear-gradient(180deg, transparent, rgba(0, 0, 0, 0.11));
    -webkit-mask-image: linear-gradient(90deg, transparent 3%, #000 18%, #000 85%, transparent 97%);
    mask-image: linear-gradient(90deg, transparent 3%, #000 18%, #000 85%, transparent 97%);
}

/* dock */
.desk {
    flex: 1;
    display: flex;
    justify-content: center;
    padding-top: 3px;
}

.dock {
    height: 86px;
    padding: 5px 3px 0;
    display: flex;
    border: 3px solid #33373d;
    border-radius: 26px;
    background: #12181f;
}

.app {
    width: 70px;
    flex: none;
    display: flex;
    flex-direction: column;
    align-items: center;
}

.app svg {
    width: 62px;
    height: 62px;
    flex: none;
    overflow: visible;
}

.dot {
    width: 8px;
    height: 8px;
    margin-top: 5px;
    border-radius: 50%;
    background: #8b8f95;
}

.divider {
    width: 31px;
    flex: none;
    position: relative;
}

.divider::before {
    content: "";
    display: block;
    width: 2px;
    height: 64px;
    margin: 5px auto 0;
    background: #4a4e54;
}

.cal-m {
    fill: #fff;
    font-family: "Inter", sans-serif;
    font-size: 11px;
    font-weight: 600;
    text-anchor: middle;
}

.cal-d {
    fill: #222;
    font-family: "Inter", sans-serif;
    font-size: 30px;
    font-weight: 300;
    text-anchor: middle;
}
```
